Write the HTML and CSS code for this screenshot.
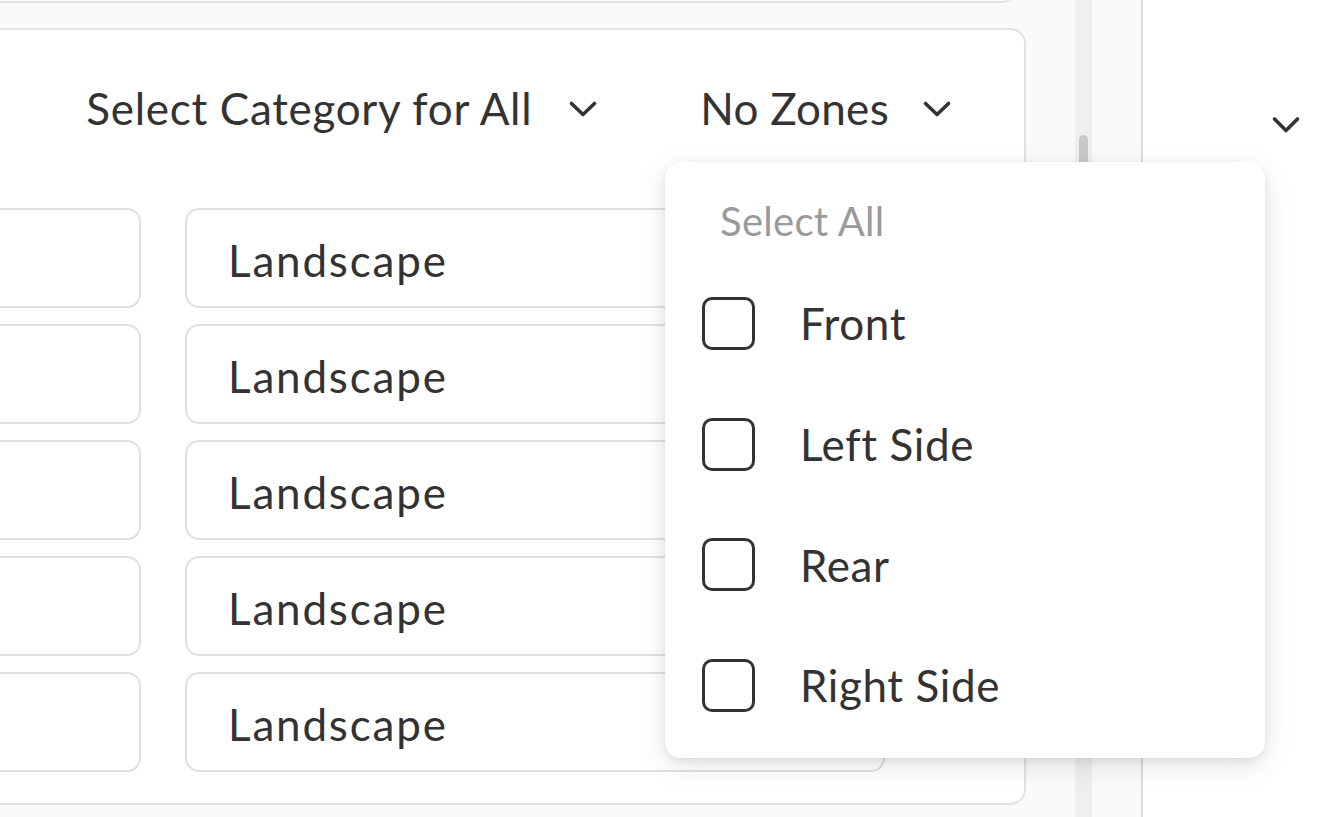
FILE: index.html
```html
<!DOCTYPE html>
<html lang="en">
<head>
<meta charset="utf-8">
<title>Zones</title>
<link rel="stylesheet" href="styles.css">
</head>
<body>
<div class="page">
  <div class="main">
    <div class="card card-top"></div>
    <div class="card card-main">
      <div class="card-head">
        <button class="select-btn select-cat">
          <span>Select Category for All</span>
          <svg class="chev" viewBox="0 0 30 18" width="30" height="18"><path d="M3.5 3.5 L15 14.5 L26.5 3.5"/></svg>
        </button>
        <button class="select-btn select-zone">
          <span>No Zones</span>
          <svg class="chev" viewBox="0 0 30 18" width="30" height="18"><path d="M3.5 3.5 L15 14.5 L26.5 3.5"/></svg>
        </button>
      </div>
      <div class="rows">
        <div class="field field-left"></div>
        <div class="field field-right">Landscape</div>
        <div class="field field-left"></div>
        <div class="field field-right">Landscape</div>
        <div class="field field-left"></div>
        <div class="field field-right">Landscape</div>
        <div class="field field-left"></div>
        <div class="field field-right">Landscape</div>
        <div class="field field-left"></div>
        <div class="field field-right">Landscape</div>
      </div>
    </div>
  </div>
  <div class="track"><div class="thumb"></div></div>
  <div class="gutter"></div>
  <div class="side">
    <svg class="chev chev-side" viewBox="0 0 30 20" width="30" height="20"><path d="M3.5 4 L15 15.5 L26.5 4"/></svg>
  </div>

  <div class="menu">
    <div class="menu-all">Select All</div>
    <ul class="menu-list">
      <li class="menu-item"><span class="check"></span><span>Front</span></li>
      <li class="menu-item"><span class="check"></span><span>Left Side</span></li>
      <li class="menu-item"><span class="check"></span><span>Rear</span></li>
      <li class="menu-item"><span class="check"></span><span>Right Side</span></li>
    </ul>
  </div>
</div>
</body>
</html>
```

FILE: styles.css
```css
* { box-sizing: border-box; }

html, body {
  margin: 0;
  padding: 0;
  height: 100%;
  overflow: hidden;
}

body {
  background: #f9fafc;
  font-family: "Lato", "Noto Sans", sans-serif;
  color: #333333;
}

.page {
  position: relative;
  display: flex;
  width: 1323px;
  height: 817px;
  overflow: hidden;
}

.main {
  flex: 0 0 1375px;
  margin-left: -300px;
  display: flex;
  flex-direction: column;
}

.card {
  background: #ffffff;
  border: 2px solid #e2e2e2;
  border-radius: 16px;
}

.card-top {
  height: 40px;
  margin-top: -37px;
  width: 1318px;
}

.card-main {
  margin-top: 25px;
  width: 1326px;
  height: 777px;
  padding: 0 0 31px 40px;
}

.card-head {
  height: 156px;
  margin-bottom: 22px;
  display: flex;
  justify-content: flex-end;
  align-items: center;
  gap: 102px;
  padding-right: 72px;
}

.select-btn {
  display: flex;
  align-items: center;
  background: none;
  border: 0;
  padding: 0;
  font: inherit;
  font-size: 44px;
  color: #333333;
}

.select-cat {
  gap: 36px;
  letter-spacing: 0.7px;
}

.select-zone {
  gap: 33px;
  letter-spacing: 0.3px;
}

.chev {
  display: block;
  fill: none;
  stroke: #333333;
  stroke-width: 3.6;
  stroke-linecap: round;
  stroke-linejoin: round;
}

.select-btn .chev { margin-top: 2px; }

.rows {
  display: grid;
  grid-template-columns: 399px 700px;
  grid-auto-rows: 100px;
  column-gap: 44px;
  row-gap: 16px;
}

.field {
  border: 2px solid #e0e0e0;
  border-radius: 14px;
  background: #ffffff;
  display: flex;
  align-items: center;
  padding: 3px 0 0 41px;
  font-size: 44px;
  letter-spacing: 1.8px;
  color: #333333;
}

.track {
  flex: 0 0 17px;
  background: #efefef;
  position: relative;
}

.thumb {
  position: absolute;
  left: 4px;
  top: 135px;
  width: 9px;
  height: 260px;
  border-radius: 5px;
  background: #c9c9c9;
}

.gutter {
  flex: 0 0 49px;
}

.side {
  flex: 1;
  background: #ffffff;
  border-left: 2px solid #dcdcdc;
  padding: 115px 0 0 128px;
}

.menu {
  position: absolute;
  left: 665px;
  top: 162px;
  width: 600px;
  height: 596px;
  background: #ffffff;
  border-radius: 16px;
  box-shadow: 0 3px 8px rgba(0, 0, 0, 0.08), 0 8px 30px rgba(0, 0, 0, 0.10);
  padding: 21px 0 0 37px;
}

.menu-all {
  height: 76px;
  display: flex;
  align-items: center;
  padding-left: 18px;
  font-size: 40px;
  letter-spacing: 0.3px;
  color: #9a9a9a;
}

.menu-list {
  list-style: none;
  margin: 4px 0 0;
  padding: 0;
}

.menu-item {
  height: 120.7px;
  display: flex;
  align-items: center;
  gap: 45px;
  font-size: 44px;
  letter-spacing: 0.6px;
  color: #333333;
}

.check {
  flex: 0 0 53px;
  width: 53px;
  height: 53px;
  border: 3px solid #333333;
  border-radius: 10px;
}
```
